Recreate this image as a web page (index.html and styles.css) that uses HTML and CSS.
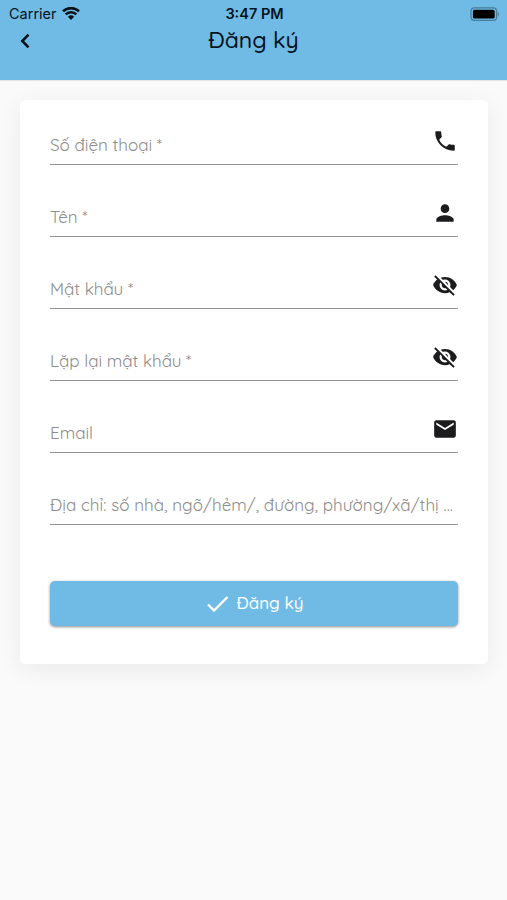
FILE: index.html
```html
<!DOCTYPE html>
<html lang="vi">
<head>
<meta charset="utf-8">
<title>Đăng ký</title>
<link rel="stylesheet" href="styles.css">
</head>
<body>
<header class="header">
  <div class="status">
    <div class="carrier"><span>Carrier</span>
      <svg class="wifi" viewBox="0 0 18 13"><path d="M1 4.300a11.600 11.600 0 0 1 16 0M3.700 7.400a7.600 7.600 0 0 1 10.600 0" fill="none" stroke="#07131a" stroke-width="2.600"/><path d="M5.900 9.700a4.600 4.600 0 0 1 6.200 0L9 13z" fill="#07131a"/></svg>
    </div>
    <span class="time">3:47 PM</span>
    <svg class="battery" viewBox="0 0 30 14"><rect x="1" y=".9" width="25.6" height="12.4" rx="3.4" fill="none" stroke="#477b99" stroke-width="1.2"/><rect x="2.9" y="2.8" width="21.8" height="8.7" rx="1.6" fill="#000"/><path d="M27.8 4.8q2.4 2.3 0 4.6z" fill="#477b99"/></svg>
  </div>
  <div class="nav">
    <svg class="back" viewBox="0 0 12 16"><path d="M9.500 1.700 3.300 8l6.200 6.300" fill="none" stroke="#07131a" stroke-width="2.600"/></svg>
    <h1 class="title">Đăng ký</h1>
  </div>
</header>
<main class="card">
  <div class="field"><span class="label">Số điện thoại *</span>
    <svg class="icon" viewBox="0 0 24 24"><path d="M6.62 10.79c1.44 2.83 3.76 5.14 6.59 6.59l2.2-2.2c.27-.27.67-.36 1.02-.24 1.12.37 2.33.57 3.57.57.55 0 1 .45 1 1V20c0 .55-.45 1-1 1C10.61 21 3 13.39 3 4c0-.55.45-1 1-1h3.5c.55 0 1 .45 1 1 0 1.25.2 2.45.57 3.57.11.35.03.74-.25 1.02z"/></svg></div>
  <div class="field"><span class="label">Tên *</span>
    <svg class="icon" viewBox="0 0 24 24"><path d="M12 12c2.21 0 4-1.79 4-4s-1.79-4-4-4-4 1.79-4 4 1.79 4 4 4zm0 2c-2.67 0-8 1.34-8 4v2h16v-2c0-2.66-5.33-4-8-4z"/></svg></div>
  <div class="field"><span class="label">Mật khẩu *</span>
    <svg class="icon" viewBox="0 0 24 24"><path d="M12 7c2.76 0 5 2.24 5 5 0 .65-.13 1.26-.36 1.83l2.92 2.92c1.51-1.26 2.7-2.89 3.43-4.75-1.73-4.39-6-7.5-11-7.5-1.4 0-2.74.25-3.98.7l2.16 2.16C10.74 7.13 11.35 7 12 7zM2 4.27l2.28 2.28.46.46C3.08 8.3 1.78 10.02 1 12c1.73 4.39 6 7.5 11 7.5 1.55 0 3.03-.3 4.38-.84l.42.42L19.73 22 21 20.73 3.27 3 2 4.27zM7.53 9.8l1.55 1.55c-.05.21-.08.43-.08.65 0 1.66 1.34 3 3 3 .22 0 .44-.03.65-.08l1.55 1.55c-.67.33-1.41.53-2.2.53-2.76 0-5-2.24-5-5 0-.79.2-1.53.53-2.2zm4.31-.78 3.15 3.15.02-.16c0-1.66-1.34-3-3-3l-.17.01z"/></svg></div>
  <div class="field"><span class="label">Lặp lại mật khẩu *</span>
    <svg class="icon" viewBox="0 0 24 24"><path d="M12 7c2.76 0 5 2.24 5 5 0 .65-.13 1.26-.36 1.83l2.92 2.92c1.51-1.26 2.7-2.89 3.43-4.75-1.73-4.39-6-7.5-11-7.5-1.4 0-2.74.25-3.98.7l2.16 2.16C10.74 7.13 11.35 7 12 7zM2 4.27l2.28 2.28.46.46C3.08 8.3 1.78 10.02 1 12c1.73 4.39 6 7.5 11 7.5 1.55 0 3.03-.3 4.38-.84l.42.42L19.73 22 21 20.73 3.27 3 2 4.27zM7.53 9.8l1.55 1.55c-.05.21-.08.43-.08.65 0 1.66 1.34 3 3 3 .22 0 .44-.03.65-.08l1.55 1.55c-.67.33-1.41.53-2.2.53-2.76 0-5-2.24-5-5 0-.79.2-1.53.53-2.2zm4.31-.78 3.15 3.15.02-.16c0-1.66-1.34-3-3-3l-.17.01z"/></svg></div>
  <div class="field"><span class="label">Email</span>
    <svg class="icon" viewBox="0 0 24 24"><path d="M20 4H4c-1.1 0-1.99.9-1.99 2L2 18c0 1.1.9 2 2 2h16c1.1 0 2-.9 2-2V6c0-1.1-.9-2-2-2zm0 4-8 5-8-5V6l8 5 8-5v2z"/></svg></div>
  <div class="field"><span class="label address">Địa chỉ: số nhà, ngõ/hẻm/, đường, phường/xã/thị ...</span></div>
  <button class="submit" type="button">
    <svg class="check" viewBox="0 0 24 18"><path d="m2 9.500 6 6L21.500 2" fill="none" stroke="#fff" stroke-width="2.400"/></svg>
    <span>Đăng ký</span>
  </button>
</main>
</body>
</html>
```
FILE: styles.css
```css
* { box-sizing: border-box; }
body {
  margin: 0;
  min-height: 900px;
  background: #fafafa;
  font-family: Quicksand, Lato, "Open Sans", sans-serif;
}
.header {
  height: 80px;
  background: #6fbbe6;
  color: #07131a;
  box-shadow: 0 1px 1px rgba(0, 0, 0, .08);
}
.status {
  display: grid;
  grid-template-columns: 1fr auto 1fr;
  height: 27px;
  padding: 0 7px 0 9px;
  align-items: center;
  font: 14.5px/27px Inter, sans-serif;
}
.carrier { display: flex; align-items: center; gap: 5px; }
.wifi { width: 18px; height: 13px; }
.time { font-weight: 600; font-size: 14.5px; }
.battery { width: 30px; height: 14px; justify-self: end; }
.nav {
  display: grid;
  grid-template-columns: 40px 1fr 40px;
  height: 28px;
  align-items: center;
}
.back { width: 12px; height: 16px; margin-left: 19px; }
.title { margin: -2px 0 0; text-align: center; font-size: 23px; font-weight: 500; line-height: 28px; }
.card {
  margin: 20px 19px 0 20px;
  height: 564px;
  padding: 0 30px;
  background: #fff;
  border-radius: 5px;
  box-shadow: 0 5px 24px rgba(0, 0, 0, .065);
}
.field {
  display: flex;
  justify-content: space-between;
  align-items: flex-end;
  height: 72px;
  padding-bottom: 8px;
  border-bottom: 1px solid #929292;
}
.field:first-child { height: 65px; }
.label { color: #8c8c8c; font-size: 17px; line-height: 22px; white-space: nowrap; }
.address { letter-spacing: .05px; }
.icon { width: 26px; height: 26px; fill: #1c1c1e; flex: none; margin-bottom: 2px; }
.submit {
  display: flex;
  align-items: center;
  justify-content: center;
  gap: 6px;
  width: 100%;
  height: 45px;
  margin-top: 56px;
  padding: 0 0 0 2px;
  border: 0;
  border-radius: 5px;
  background: #6fbbe6;
  color: #fff;
  font: 500 17px/24px Quicksand, Lato, sans-serif;
  box-shadow: 0 1px 3px rgba(0, 0, 0, .45);
}
.submit span { margin-top: -1px; }
.check { width: 24px; height: 18px; }
```
